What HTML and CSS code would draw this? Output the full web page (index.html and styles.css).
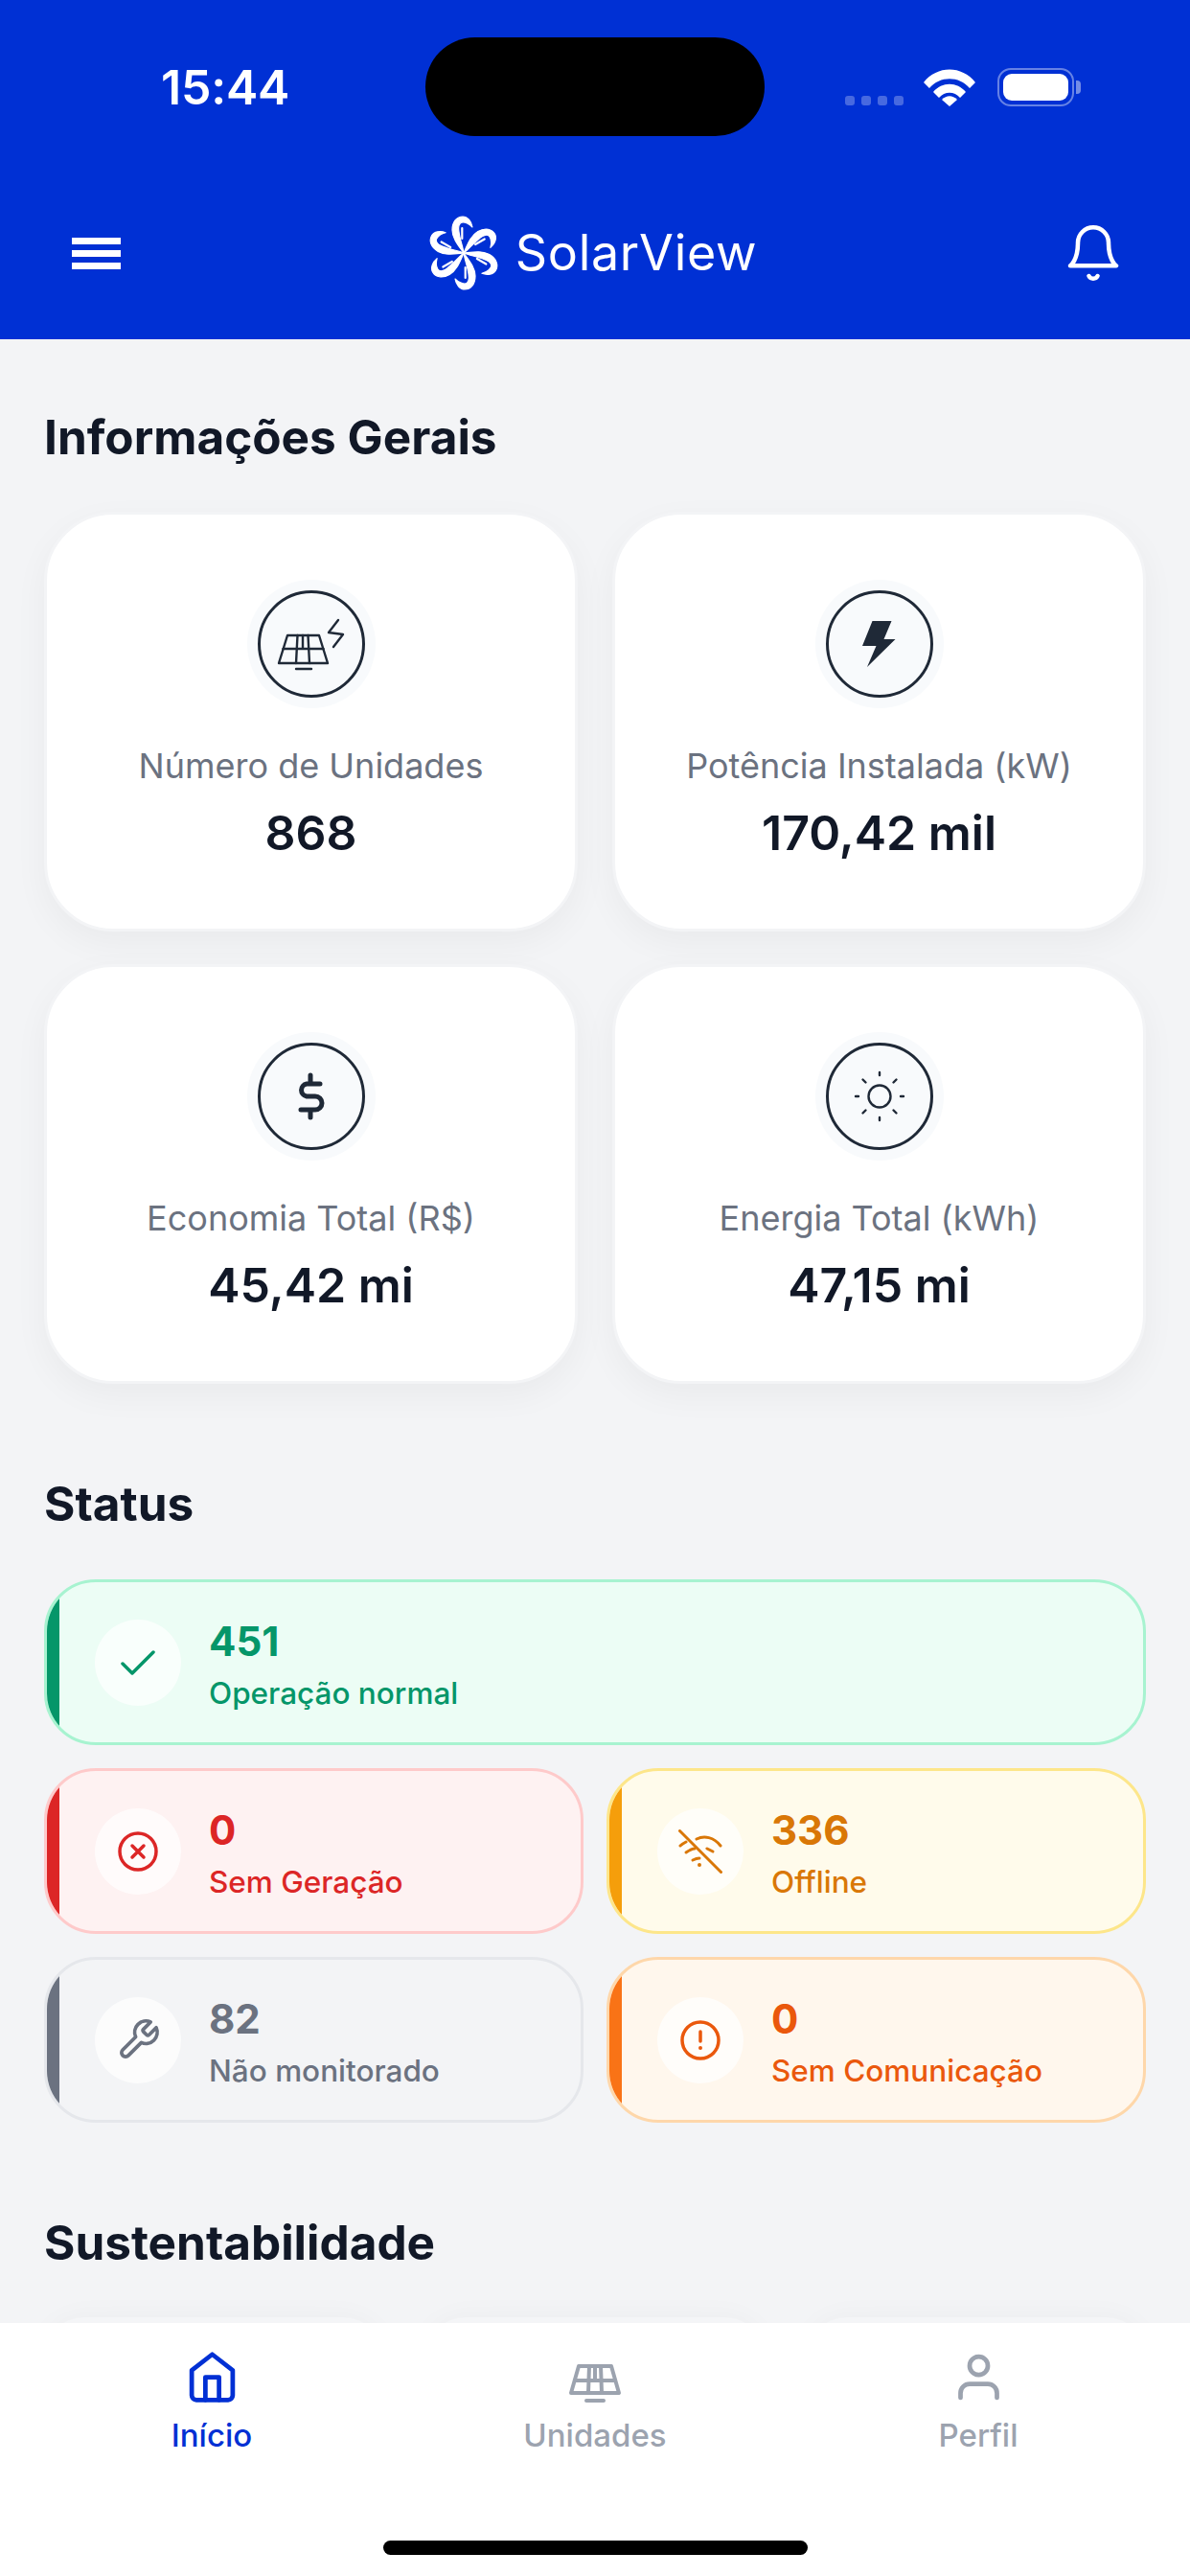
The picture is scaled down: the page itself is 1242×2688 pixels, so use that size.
FILE: index.html
```html
<!DOCTYPE html>
<html lang="pt-BR">
<head>
    <meta charset="UTF-8">
    <meta name="viewport" content="width=device-width, initial-scale=1.0">
    <title>SolarView</title>
    <link rel="stylesheet" href="styles.css">
</head>
<body>

    <svg width="0" height="0" class="defs">
        <defs>
            <g id="petal">
                <path d="M0 0C-5 -7 -12 -15 -12 -24C-12 -33 -7 -38 -1 -38C4 -38 8 -33 9 -27C6 -30 3 -32 -1 -32C-5 -32 -6 -27 -5 -22C-4 -14 -1 -7 0 0Z" class="petal-body"/>
                <path d="M-1.700 -26L-1.700 -15" class="petal-slit"/>
            </g>
        </defs>
    </svg>

    <header class="top">
        <div class="status-bar">
            <div class="time">15:44</div>
            <div class="island"></div>
            <div class="status-icons">
                <div class="signal"><i></i><i></i><i></i><i></i></div>
                <svg class="wifi" width="54" height="40" viewBox="0 0 54 40">
                    <path d="M0 15C14 -3 40 -3 54 15L48 21C37 8 17 8 6 21Z" fill="#fff"/>
                    <path d="M10 25C19 14 35 14 44 25L38 31C32 24 22 24 16 31Z" fill="#fff"/>
                    <path d="M19 33C24 28 30 28 35 33L27 40Z" fill="#fff"/>
                </svg>
                <div class="battery"><div class="battery-fill"></div></div>
                <div class="battery-cap"></div>
            </div>
        </div>
        <div class="nav-bar">
            <div class="burger"><i></i><i></i><i></i></div>
            <div class="logo">
                <svg width="78" height="78" viewBox="-39 -39 78 78" fill="#fff">
                    <use href="#petal"/>
                    <use href="#petal" transform="rotate(60)"/>
                    <use href="#petal" transform="rotate(120)"/>
                    <use href="#petal" transform="rotate(180)"/>
                    <use href="#petal" transform="rotate(240)"/>
                    <use href="#petal" transform="rotate(300)"/>
                </svg>
                <span class="logo-text">SolarView</span>
            </div>
            <svg class="bell" width="64" height="64" viewBox="0 0 24 24" fill="none" stroke="#fff" stroke-width="1.700" stroke-linecap="round" stroke-linejoin="round">
                <path d="M6 8a6 6 0 0 1 12 0c0 7 3 9 3 9H3s3-2 3-9"/>
                <path d="M10.300 21a1.940 1.940 0 0 0 3.400 0"/>
            </svg>
        </div>
    </header>

    <main class="content">
        <h2 class="section-title">Informações Gerais</h2>
        <div class="info-grid">
            <div class="info-card">
                <div class="halo"><div class="ring">
                    <svg width="72" height="72" viewBox="0 0 72 72" fill="none" stroke="#1f2937" stroke-width="2.400" stroke-linecap="round" stroke-linejoin="round">
                        <path d="M11 27H44L53 56H2Z"/>
                        <path d="M6.500 41H48.500M21.500 27L20 56M32.500 27L34 56M27 27V41"/>
                        <path d="M20 62H36"/>
                        <path d="M64 11L54 24L69 26L59 39"/>
                    </svg>
                </div></div>
                <div class="info-label">Número de Unidades</div>
                <div class="info-value">868</div>
            </div>
            <div class="info-card">
                <div class="halo"><div class="ring">
                    <svg width="35" height="48" viewBox="0 0 35 48" fill="#1f2937">
                        <path d="M10.500 0H30.500L22.500 19H34.500L5 48L14.500 26H0Z"/>
                    </svg>
                </div></div>
                <div class="info-label">Potência Instalada (kW)</div>
                <div class="info-value">170,42 mil</div>
            </div>
            <div class="info-card">
                <div class="halo"><div class="ring">
                    <svg width="48" height="50" viewBox="0 0 24 25" fill="none" stroke="#1f2937" stroke-width="2.500" stroke-linecap="round" stroke-linejoin="round">
                        <path d="M11.500 1.500v3.500M11.500 20v3.500"/>
                        <path d="M16.500 6H9.500a3.300 3.300 0 0 0 0 6.500h4.500a3.300 3.300 0 0 1 0 7H6.500"/>
                    </svg>
                </div></div>
                <div class="info-label">Economia Total (R$)</div>
                <div class="info-value">45,42 mi</div>
            </div>
            <div class="info-card">
                <div class="halo"><div class="ring">
                    <svg width="60" height="60" viewBox="0 0 60 60" fill="none" stroke="#1f2937" stroke-width="2.400" stroke-linecap="round">
                        <circle cx="30" cy="30" r="11.500"/>
                        <path d="M30 5v3M30 52v3M5 30h3M52 30h3M12.500 12.500l3 3M44.500 44.500l3 3M12.500 47.500l3-3M44.500 15.500l3-3"/>
                    </svg>
                </div></div>
                <div class="info-label">Energia Total (kWh)</div>
                <div class="info-value">47,15 mi</div>
            </div>
        </div>

        <h2 class="section-title status-title">Status</h2>
        <div class="status-grid">
            <div class="status-card wide green">
                <div class="status-bar-mark"></div>
                <div class="status-icon">
                    <svg width="36" height="26" viewBox="0 0 36 26" fill="none" stroke="currentColor" stroke-width="3.500" stroke-linecap="round" stroke-linejoin="round"><path d="M2 14L12 24L34 2"/></svg>
                </div>
                <div class="status-info"><div class="status-num">451</div><div class="status-text">Operação normal</div></div>
            </div>
            <div class="status-card red">
                <div class="status-bar-mark"></div>
                <div class="status-icon">
                    <svg width="42" height="42" viewBox="0 0 42 42" fill="none" stroke="currentColor" stroke-width="3.500" stroke-linecap="round"><circle cx="21" cy="21" r="19"/><path d="M15 15L27 27M27 15L15 27"/></svg>
                </div>
                <div class="status-info"><div class="status-num">0</div><div class="status-text">Sem Geração</div></div>
            </div>
            <div class="status-card yellow">
                <div class="status-bar-mark"></div>
                <div class="status-icon">
                    <svg width="46" height="46" viewBox="0 0 46 46" fill="none" stroke="currentColor" stroke-width="3" stroke-linecap="round"><path d="M1.500 1.500L44.500 44.500"/><path d="M19 10C27 6 37 8 44 17"/><path d="M2 17C4 15 6 14 8 13"/><path d="M8 24C11 22 14 20 17 20"/><path d="M15 32C17 31 19 30 22 30"/><path d="M30 20C32 21 34 22 36 23"/><circle cx="22" cy="37" r="1" fill="currentColor" stroke-width="2"/></svg>
                </div>
                <div class="status-info"><div class="status-num">336</div><div class="status-text">Offline</div></div>
            </div>
            <div class="status-card grey">
                <div class="status-bar-mark"></div>
                <div class="status-icon">
                    <svg width="47" height="47" viewBox="0 0 24 24" fill="none" stroke="currentColor" stroke-width="1.900" stroke-linecap="round" stroke-linejoin="round"><path d="M14.700 6.300a1 1 0 0 0 0 1.400l1.600 1.600a1 1 0 0 0 1.400 0l3.770-3.770a6 6 0 0 1-7.940 7.940l-6.910 6.910a2.120 2.120 0 0 1-3-3l6.910-6.910a6 6 0 0 1 7.940-7.940l-3.760 3.760z"/></svg>
                </div>
                <div class="status-info"><div class="status-num">82</div><div class="status-text">Não monitorado</div></div>
            </div>
            <div class="status-card orange">
                <div class="status-bar-mark"></div>
                <div class="status-icon">
                    <svg width="42" height="42" viewBox="0 0 42 42" fill="none" stroke="currentColor" stroke-width="3.500" stroke-linecap="round"><circle cx="21" cy="21" r="19"/><path d="M21 12V22"/><circle cx="21" cy="29" r="1" fill="currentColor" stroke-width="2"/></svg>
                </div>
                <div class="status-info"><div class="status-num">0</div><div class="status-text">Sem Comunicação</div></div>
            </div>
        </div>

        <h2 class="section-title green-title">Sustentabilidade</h2>
        <div class="eco-row">
            <div class="eco-card"></div>
            <div class="eco-card"></div>
            <div class="eco-card"></div>
        </div>
    </main>

    <nav class="tabbar">
        <div class="tabs">
            <div class="tab active">
                <div class="tab-icon">
                    <svg width="57" height="57" viewBox="0 0 24 24" fill="none" stroke="currentColor" stroke-width="2" stroke-linecap="round" stroke-linejoin="round"><path d="M3 9l9-7 9 7v11a2 2 0 0 1-2 2H5a2 2 0 0 1-2-2z"/><path d="M9 22V12h6v10"/></svg>
                </div>
                <span>Início</span>
            </div>
            <div class="tab">
                <div class="tab-icon">
                    <svg width="60" height="60" viewBox="0 0 60 60" fill="none" stroke="currentColor" stroke-width="4" stroke-linecap="round" stroke-linejoin="round"><path d="M13 19H47L55 47H5Z"/><path d="M9 34H51M24 19L23 47M36 19L37 47M30 19V34"/><path d="M21 55H39"/></svg>
                </div>
                <span>Unidades</span>
            </div>
            <div class="tab">
                <div class="tab-icon">
                    <svg width="57" height="57" viewBox="0 0 24 24" fill="none" stroke="currentColor" stroke-width="2" stroke-linecap="round" stroke-linejoin="round"><path d="M20 21v-2a4 4 0 0 0-4-4H8a4 4 0 0 0-4 4v2"/><circle cx="12" cy="7" r="4"/></svg>
                </div>
                <span>Perfil</span>
            </div>
        </div>
        <div class="home-indicator"></div>
    </nav>

</body>
</html>
```

FILE: styles.css
```css
* {
    box-sizing: border-box;
}

html, body {
    margin: 0;
    height: 2688px;
}

body {
    font-family: Inter, "Liberation Sans", sans-serif;
    background-color: #f3f4f6;
    display: flex;
    flex-direction: column;
    overflow: hidden;
}

.defs {
    display: block;
    height: 0;
}

.petal-body {
    stroke: white;
    stroke-width: 1.200;
    stroke-linejoin: round;
}

.petal-slit {
    fill: none;
    stroke: white;
    stroke-width: 2.200;
    stroke-linecap: round;
}

/* top blue area */
.top {
    height: 354px;
    flex: none;
    background-color: #0030d4;
    color: white;
}

.status-bar {
    display: flex;
    align-items: flex-start;
    height: 180px;
    padding-top: 39px;
}

.time {
    width: 444px;
    padding: 22px 0 0 168px;
    font-size: 50px;
    font-weight: 600;
    line-height: 60px;
    letter-spacing: -0.2px;
}

.island {
    width: 354px;
    height: 103px;
    background-color: black;
    border-radius: 52px;
}

.status-icons {
    display: flex;
    align-items: flex-end;
    height: 72px;
    padding-left: 84px;
}

.signal {
    display: flex;
    gap: 7px;
    margin-right: 21px;
    margin-bottom: 1px;
}

.signal i {
    width: 10px;
    height: 10px;
    border-radius: 3px;
    background-color: rgba(255, 255, 255, 0.28);
}

.battery {
    width: 80px;
    height: 40px;
    margin-left: 23px;
    padding: 4px;
    border: 2px solid rgba(255, 255, 255, 0.4);
    border-radius: 14px;
}

.battery-fill {
    height: 100%;
    background-color: white;
    border-radius: 9px;
}

.battery-cap {
    width: 5px;
    height: 14px;
    margin: 0 0 13px 2px;
    background-color: rgba(255, 255, 255, 0.45);
    border-radius: 0 4px 4px 0;
}

.nav-bar {
    display: flex;
    align-items: center;
    justify-content: space-between;
    height: 174px;
    padding: 0 69px 6px 75px;
}

.burger {
    display: flex;
    flex-direction: column;
    gap: 6px;
    width: 51px;
}

.burger i {
    height: 7px;
    background-color: white;
}

.logo {
    display: flex;
    align-items: center;
    gap: 15px;
}

.logo-text {
    font-size: 52px;
    font-weight: 400;
    line-height: 60px;
    letter-spacing: 0.7px;
}

/* page content */
.content {
    flex: 1;
    min-height: 0;
    overflow: hidden;
    padding: 0 46px;
}

.section-title {
    margin: 0;
    padding-top: 72px;
    font-size: 49.500px;
    line-height: 60px;
    font-weight: 700;
    color: #111827;
}

.info-grid {
    display: grid;
    grid-template-columns: 557px 557px;
    gap: 34px 36px;
    margin-top: 48px;
}

.info-card {
    height: 438px;
    padding-top: 68px;
    background-color: white;
    border: 3px solid #f3f4f6;
    border-radius: 72px;
    box-shadow: 0 12px 36px rgba(0, 0, 0, 0.045);
    text-align: center;
}

.halo {
    width: 134px;
    height: 134px;
    margin: 0 auto;
    padding: 11px;
    background-color: #f8fafc;
    border-radius: 50%;
}

.ring {
    display: flex;
    align-items: center;
    justify-content: center;
    width: 112px;
    height: 112px;
    border: 3px solid #1f2937;
    border-radius: 50%;
}

.info-label {
    margin-top: 36px;
    font-size: 36px;
    line-height: 48px;
    color: #6b7280;
}

.info-value {
    margin-top: 16px;
    font-size: 50px;
    line-height: 60px;
    font-weight: 600;
    color: #111827;
}

.status-title {
    padding-top: 95px;
}

.status-grid {
    display: grid;
    grid-template-columns: 563px 563px;
    gap: 24px;
    margin-top: 49px;
}

.status-card {
    display: flex;
    align-items: center;
    height: 173px;
    overflow: hidden;
    border-width: 3px;
    border-style: solid;
    border-radius: 54px;
}

.wide {
    grid-column: span 2;
}

.status-bar-mark {
    width: 13px;
    align-self: stretch;
    flex: none;
}

.status-icon {
    display: flex;
    align-items: center;
    justify-content: center;
    width: 90px;
    height: 90px;
    margin: 0 29px 0 37px;
    flex: none;
    background-color: rgba(255, 255, 255, 0.7);
    border-radius: 50%;
}

.status-info {
    padding-top: 6px;
}

.status-num {
    font-size: 42px;
    line-height: 50px;
    font-weight: 700;
}

.status-text {
    margin-top: 8px;
    font-size: 31.500px;
    line-height: 42px;
    font-weight: 500;
}

.green { background-color: #ecfdf5; border-color: #a7f3d0; color: #059669; }
.green .status-bar-mark { background-color: #059669; }
.red { background-color: #fef2f2; border-color: #fecaca; color: #dc2626; }
.red .status-bar-mark { background-color: #dc2626; }
.yellow { background-color: #fffbeb; border-color: #fde68a; color: #d97706; }
.yellow .status-bar-mark { background-color: #f59e0b; }
.grey { background-color: #f3f4f6; border-color: #e5e7eb; color: #6b7280; }
.grey .status-bar-mark { background-color: #6b7280; }
.orange { background-color: #fff7ed; border-color: #fed7aa; color: #ea580c; }
.orange .status-bar-mark { background-color: #f97316; }

.green-title {
    padding-top: 95px;
}

/* only the top edge of these cards shows above the tab bar */
.eco-row {
    display: flex;
    justify-content: space-between;
    margin-top: 48px;
}

.eco-card {
    width: 354px;
    height: 200px;
    background-color: #f4f5f7;
    border-radius: 42px;
    box-shadow: 0 0 30px rgba(0, 0, 0, 0.035);
}

/* bottom tabs */
.tabbar {
    height: 264px;
    flex: none;
    background-color: white;
    position: relative;
}

.tabs {
    display: grid;
    grid-template-columns: repeat(3, 400px);
    padding: 25px 21px 0;
}

.tab {
    display: flex;
    flex-direction: column;
    align-items: center;
    font-size: 33px;
    line-height: 40px;
    font-weight: 500;
    color: #9ca3af;
}

.tab.active {
    color: #0030d4;
}

.tab-icon {
    display: flex;
    align-items: center;
    justify-content: center;
    height: 62px;
    margin-bottom: 10px;
}

.home-indicator {
    position: absolute;
    left: 400px;
    top: 227px;
    width: 443px;
    height: 15px;
    background-color: black;
    border-radius: 8px;
}
```
